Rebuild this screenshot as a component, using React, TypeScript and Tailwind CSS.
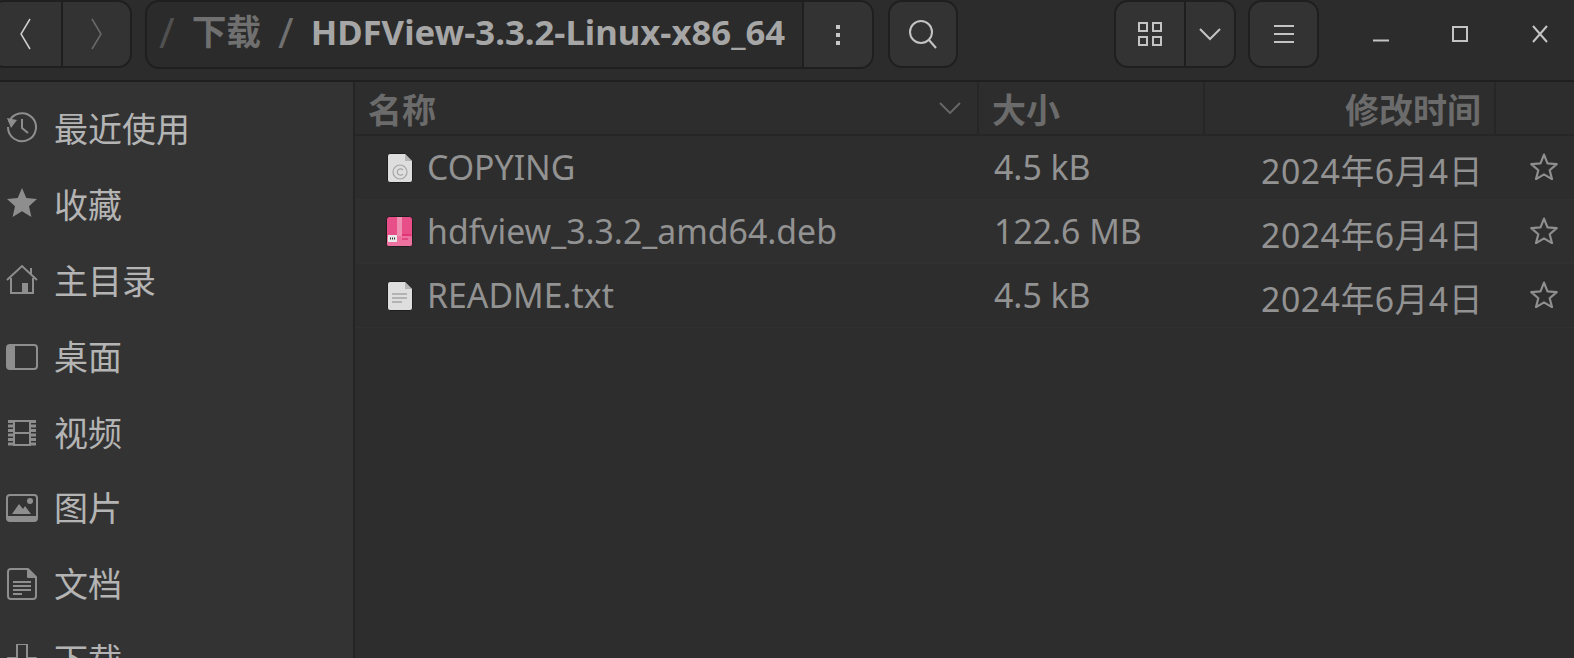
const cjk = "font-['Noto_Sans','Noto_Sans_CJK_SC',sans-serif]";

function Divider() {
  return <div className="w-[2px] self-stretch bg-[#1e1e1e]" />;
}

function SideIcon({ name }: { name: string }) {
  if (name === "recent")
    return (
      <svg className="-mt-[4px]" width="32" height="32" viewBox="0 0 32 32" fill="none" stroke="currentColor" strokeWidth="2">
        <path d="M3 11a14 14 0 1 1-1 5" />
        <path d="M1 7l10 2-6 8z" fill="currentColor" stroke="none" />
        <path d="M16 8v9l6 5" />
      </svg>
    );
  if (name === "star")
    return (
      <svg className="-mt-[6px]" width="32" height="32" viewBox="0 0 32 32" fill="currentColor">
        <path d="M16 2l4.300 10 10.700 1-8 7.200 2.400 10.800L16 25.300 6.600 31 9 20.200 1 13l10.700-1z" />
      </svg>
    );
  if (name === "home")
    return (
      <svg className="-mt-[2px]" width="32" height="32" viewBox="0 0 32 32" fill="none" stroke="currentColor" strokeWidth="2">
        <path d="M1 16L16 2l15 14" />
        <path d="M5 14v15h22V14" />
        <path d="M25 4v6" />
        <rect x="16" y="19" width="6" height="10" fill="currentColor" stroke="none" />
      </svg>
    );
  if (name === "desktop")
    return (
      <svg width="32" height="32" viewBox="0 0 32 32" fill="none" stroke="currentColor" strokeWidth="2">
        <rect x="1" y="4" width="30" height="24" rx="3" />
        <path d="M2 5h7v22H2z" fill="currentColor" stroke="none" />
      </svg>
    );
  if (name === "video")
    return (
      <svg width="32" height="32" viewBox="0 0 32 32" fill="none" stroke="currentColor" strokeWidth="2">
        <path d="M8 4h16v24H8zM8 16h16" />
        <path d="M5 3v26M27 3v26" strokeWidth="6" strokeDasharray="3 1.500" />
      </svg>
    );
  if (name === "picture")
    return (
      <svg width="32" height="32" viewBox="0 0 32 32" fill="none" stroke="currentColor" strokeWidth="2">
        <rect x="1" y="3" width="30" height="26" rx="3" />
        <path d="M1 24h30v3a2 2 0 0 1-2 2H3a2 2 0 0 1-2-2z" fill="currentColor" stroke="none" />
        <path d="M6 22l7-10 4 5 2-3 6 8z" fill="currentColor" stroke="none" />
        <circle cx="24" cy="9" r="3" fill="currentColor" stroke="none" />
      </svg>
    );
  if (name === "document")
    return (
      <svg width="32" height="32" viewBox="0 0 32 32" fill="none" stroke="currentColor" strokeWidth="2" strokeLinejoin="round">
        <path d="M5 1h17l8 8v19a3 3 0 0 1-3 3H5a3 3 0 0 1-3-3V4a3 3 0 0 1 3-3z" />
        <path d="M22 1v8h8" fill="currentColor" />
        <path d="M7 14h18M7 18h18M7 22h18M7 26h9" />
      </svg>
    );
  return (
    <svg width="32" height="32" viewBox="0 0 32 32" fill="none" stroke="currentColor" strokeWidth="2" strokeLinejoin="round">
      <path d="M11 0h10v14h9L16 28 2 14h9z" />
    </svg>
  );
}

function FileIcon({ kind }: { kind: string }) {
  if (kind === "deb")
    return (
      <svg width="27" height="31" viewBox="0 0 27 31">
        <rect x="0.500" y="0.500" width="26" height="30" rx="3" fill="#e84f88" stroke="#1e1e1e" />
        <rect x="11" y="1" width="5" height="29" fill="#ee8fb2" />
        <rect x="1" y="20" width="25" height="10" rx="2" fill="#ed72a0" />
        <rect x="2" y="19" width="9" height="7" fill="#e8e8e8" />
        <path d="M4 22.500h1M6 22.500h1M8 22.500h1" stroke="#333" strokeWidth="2" />
        <path d="M16 19h9M16 23h6" stroke="#d81b60" />
      </svg>
    );
  return (
    <svg width="26" height="30" viewBox="0 0 26 30">
      <path d="M3 .500h15l7.500 7.500v19a2.500 2.500 0 0 1-2.500 2.500H3A2.500 2.500 0 0 1 .500 27V3A2.500 2.500 0 0 1 3 .500z" fill="#dedede" stroke="#1e1e1e" />
      <path d="M18 1v7h7z" fill="#b5b5b5" />
      {kind === "copying" ? (
        <g fill="none" stroke="#a5a5a5" strokeWidth="1.200">
          <circle cx="13" cy="19" r="7" />
          <path d="M16 17a3.200 3.200 0 1 0 0 4" />
        </g>
      ) : (
        <path d="M5 13h15M5 17h15M5 21h10" stroke="#a5a5a5" strokeWidth="1.500" />
      )}
    </svg>
  );
}

const sidebar = [
  ["recent", "最近使用"],
  ["star", "收藏"],
  ["home", "主目录"],
  ["desktop", "桌面"],
  ["video", "视频"],
  ["picture", "图片"],
  ["document", "文档"],
  ["download", "下载"],
];

const files = [
  ["copying", "COPYING", "4.5 kB"],
  ["deb", "hdfview_3.3.2_amd64.deb", "122.6 MB"],
  ["txt", "README.txt", "4.5 kB"],
];

export default function App() {
  return (
    <div className={`h-[658px] w-[1574px] overflow-hidden bg-[#2d2d2d] ${cjk}`}>
      {/* Header bar */}
      <header className="flex h-[82px] items-start border-b-2 border-[#1f1f1f] bg-[#2c2c2c] text-[#b4b4b4]">
        <div className="-ml-[10px] flex h-[68px] w-[142px] rounded-[14px] border-2 border-[#1f1f1f] bg-[#333]">
          <div className="flex w-[69px] items-center justify-center pr-[3px]">
            <svg width="14" height="34" viewBox="0 0 14 34" fill="none" stroke="#cfcfcf" strokeWidth="1.500"><path d="M12 2L3 17l9 15" /></svg>
          </div>
          <Divider />
          <div className="flex flex-1 items-center justify-center">
            <svg width="14" height="34" viewBox="0 0 14 34" fill="none" stroke="#6a6a6a" strokeWidth="1.500"><path d="M2 2l9 15-9 15" /></svg>
          </div>
        </div>

        <div className="ml-[13px] flex h-[69px] w-[729px] items-center rounded-[14px] border-2 border-[#1f1f1f] bg-[#2b2b2b]">
          <div className="flex flex-1 items-center pb-[4px] pl-[12px] text-[34.700px] font-bold whitespace-nowrap">
            <span className="text-[42px] leading-none font-normal text-[#505050]">/</span>
            <span className="ml-[17px] text-[#707070]">下载</span>
            <span className="ml-[17px] text-[42px] leading-none font-normal text-[#707070]">/</span>
            <span className="ml-[17px] text-[#a6a6a6]">HDFView-3.3.2-Linux-x86_64</span>
          </div>
          <div className="flex h-full w-[70px] items-center justify-center rounded-r-[12px] border-l-2 border-[#1f1f1f] bg-[#333]">
            <svg width="6" height="22" viewBox="0 0 6 22" fill="#c8c8c8"><rect x="1" y="1" width="4" height="4" /><rect x="1" y="9" width="4" height="4" /><rect x="1" y="17" width="4" height="4" /></svg>
          </div>
        </div>

        <div className="ml-[14px] flex h-[68px] w-[70px] items-center justify-center rounded-[14px] border-2 border-[#1f1f1f] bg-[#333]">
          <svg width="30" height="30" viewBox="0 0 30 30" fill="none" stroke="#c4c4c4" strokeWidth="2"><circle cx="13" cy="13" r="11" /><path d="M21 21l7 8" /></svg>
        </div>

        <div className="flex-1" />

        <div className="flex h-[68px] w-[122px] rounded-[14px] border-2 border-[#1f1f1f] bg-[#333]">
          <div className="flex w-[68px] items-center justify-center">
            <svg width="26" height="26" viewBox="0 0 26 26" fill="none" stroke="#c4c4c4" strokeWidth="2"><rect x="2" y="2" width="8" height="8" /><rect x="16" y="2" width="8" height="8" /><rect x="2" y="16" width="8" height="8" /><rect x="16" y="16" width="8" height="8" /></svg>
          </div>
          <Divider />
          <div className="flex flex-1 items-center justify-center">
            <svg width="22" height="14" viewBox="0 0 22 14" fill="none" stroke="#c4c4c4" strokeWidth="2"><path d="M1 2l10 10L21 2" /></svg>
          </div>
        </div>

        <div className="ml-[12px] flex h-[68px] w-[71px] items-center justify-center rounded-[14px] border-2 border-[#1f1f1f] bg-[#333]">
          <svg width="22" height="20" viewBox="0 0 22 20" fill="none" stroke="#c4c4c4" strokeWidth="2"><path d="M1 2h20M1 10h20M1 18h20" /></svg>
        </div>

        <div className="flex h-[68px] w-[255px] items-center pl-[22px] text-[#c4c4c4]">
          <div className="flex w-[79.500px] shrink-0 justify-center pt-[12px]">
            <svg width="16" height="3" viewBox="0 0 16 3" fill="currentColor"><rect width="16" height="2" y="0.500" /></svg>
          </div>
          <div className="flex w-[79.500px] shrink-0 justify-center">
            <svg width="16" height="16" viewBox="0 0 16 16" fill="none" stroke="currentColor" strokeWidth="2"><rect x="1" y="1" width="14" height="14" /></svg>
          </div>
          <div className="flex w-[79.500px] shrink-0 justify-center">
            <svg width="16" height="18" viewBox="0 0 16 18" fill="none" stroke="currentColor" strokeWidth="2"><path d="M1 1l14 16M15 1L1 17" /></svg>
          </div>
        </div>
      </header>

      <div className="flex h-[576px]">
        {/* Sidebar */}
        <aside className="w-[355px] shrink-0 border-r-2 border-[#242424] bg-[#333] pt-[9px]">
          {sidebar.map(([icon, label]) => (
            <div key={label} className="flex h-[75.900px] items-center pl-[6px] text-[#8e8e8e]">
              <SideIcon name={icon} />
              <span className="ml-[16px] text-[34px] leading-none text-[#b4b4b4]">{label}</span>
            </div>
          ))}
        </aside>

        {/* File list */}
        <main className="flex-1">
          <div className="flex h-[54px] items-center border-b-2 border-[#262626] text-[34px] font-bold text-[#6b6b6b]">
            <div className="flex h-full w-[624px] items-center justify-between border-r-2 border-[#262626] pl-[13px] pr-[16px]">
              <span className="pt-[4px]">名称</span>
              <svg width="22" height="12" viewBox="0 0 22 12" fill="none" stroke="#666" strokeWidth="2"><path d="M1 1l10 10L21 1" /></svg>
            </div>
            <div className="flex h-full w-[226px] items-center border-r-2 border-[#262626] pl-[13px] pt-[4px]">大小</div>
            <div className="flex h-full w-[291px] items-center justify-end border-r-2 border-[#262626] pr-[13px] pt-[4px]">修改时间</div>
          </div>
          {files.map(([kind, name, size], i) => (
            <div key={name} className={`flex h-[64px] items-center border-b border-[#313131] text-[33.800px] text-[#929292] ${i === 1 ? "bg-[#2f2f2f]" : ""}`}>
              <div className="flex w-[624px] items-center pl-[31px]">
                <div className="flex w-[27px] justify-center">
                  <FileIcon kind={kind} />
                </div>
                <span className="ml-[14px] whitespace-nowrap">{name}</span>
              </div>
              <div className="w-[226px] pl-[15px]">{size}</div>
              <div className="w-[291px] pr-[13px] pt-[8px] text-right tracking-[0.500px] whitespace-nowrap">2024年6月4日</div>
              <div className="flex flex-1 justify-center pb-[3px] pl-[18px]">
                <svg width="28" height="28" viewBox="0 0 32 32" fill="none" stroke="#8f8f8f" strokeWidth="2.500" strokeLinejoin="round"><path d="M16 3l4 10 10.500.800-8 7 2.600 10.200L16 25.500 6.900 31l2.600-10.200-8-7L12 13z" /></svg>
              </div>
            </div>
          ))}
        </main>
      </div>
    </div>
  );
}
